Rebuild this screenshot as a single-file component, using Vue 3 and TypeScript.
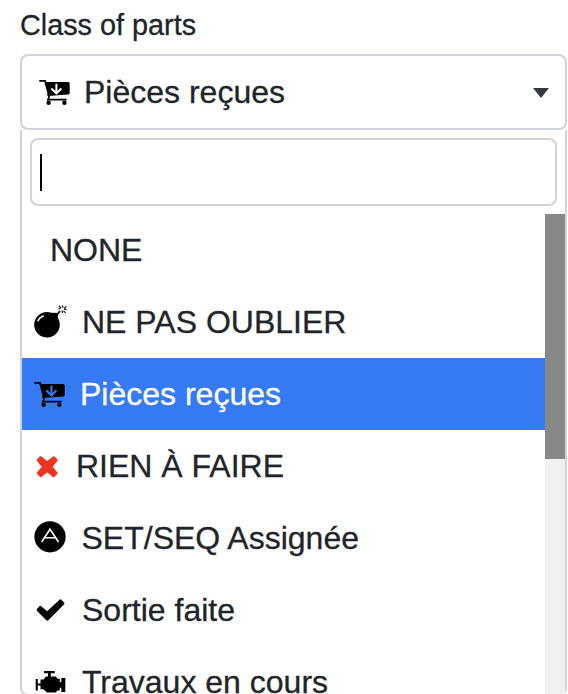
<script setup lang="ts">
import { defineComponent, h } from 'vue'

type IconName = 'bomb' | 'cart' | 'times' | 'letter' | 'check' | 'engine'

interface PartClass {
  id: string
  label: string
  icon?: IconName
}

const shapes: Record<IconName, [string, Record<string, string>][]> = {
  bomb: [
    ['circle', { cx: '15', cy: '20.7', r: '12.8' }],
    ['path', { d: 'M18.5 10.2l2.2-1.8 1.8.8 1.5-.8 2.4 2.6-.8 1.5.8 1.8-2.4 2.6z' }],
    ['path', { d: 'M25 10.5l3-3.6', class: 'thin' }],
    ['path', { d: 'M30.7 1.5v2.2M27 2l2.2 2M34.3 2.4l-2.2 1.8M32.2 5.4h2.3M31.5 6.8l2.2 2M30.2 6.6l.1 2.3M26.4 4.7h2', class: 'spark' }],
    ['path', { d: 'M5.8 17.2C6.8 14.7 9 12.7 11.8 12', class: 'shine' }],
  ],
  cart: [
    ['path', { d: 'M2.3 6h6.3l.8 2h21.8q1.5 0 1.5 1.5v9.6q0 1.3-1.4 1.5L11.2 22.1 7.3 7.7h-5z' }],
    ['path', { d: 'M10.6 20l1.6 3-1.4 2.6h18.8', class: 'rail' }],
    ['circle', { cx: '11.6', cy: '28.8', r: '2.2' }],
    ['circle', { cx: '27.4', cy: '28.8', r: '2.2' }],
    ['path', { d: 'M19.4 9.8v9.4M14.3 14.6l5.1 4.7 5-4.7', class: 'arrow' }],
  ],
  times: [
    ['path', { d: 'M8.7 9.5l6.5 5.2 6.5-5.2 2.7 2.7-5.3 6.5 5.3 6.5-2.7 2.7-6.5-5.2-6.5 5.2L6 25.2l5.3-6.5L6 12.2z', class: 'red' }],
  ],
  letter: [
    ['circle', { cx: '18', cy: '16.8', r: '15.6' }],
    ['path', { d: 'M9.7 22L18 9.2 26.5 22M12.9 17.7h10.3', class: 'stroke-light' }],
  ],
  check: [
    ['path', { d: 'M8.3 15.3l7 5.8L28.4 8.8l2.6 2.7-15.7 15.7-9.2-9.3z', class: 'rounded' }],
  ],
  engine: [
    ['path', { d: 'M12 7h10.8v2.3h-4v3.2h5l1.8 2.2h2.2v3.3h1.5v-4h4V28h-4v-4.2h-1.5v2.7h-2.3l-1.8 1.9H15l-3.6-3.2H8.5v-3.6H5.8v4.9H3.7V15h2.1v4.5h2.7v-4.1h3l2.4-2.9H16V9.3h-4z' }],
  ],
}

const PartIcon = defineComponent({
  props: { name: { type: String, required: true } },
  setup(props) {
    return () =>
      h(
        'svg',
        { viewBox: '0 0 36 36', width: 36, height: 36, 'aria-hidden': 'true' },
        shapes[props.name as IconName].map(([tag, attrs]) => h(tag, attrs)),
      )
  },
})

const selectedId = 'received'
const options: PartClass[] = [
  { id: 'none', label: 'NONE' },
  { id: 'remember', label: 'NE PAS OUBLIER', icon: 'bomb' },
  { id: 'received', label: 'Pièces reçues', icon: 'cart' },
  { id: 'nothing', label: 'RIEN À FAIRE', icon: 'times' },
  { id: 'assigned', label: 'SET/SEQ Assignée', icon: 'letter' },
  { id: 'done', label: 'Sortie faite', icon: 'check' },
  { id: 'progress', label: 'Travaux en cours', icon: 'engine' },
]
</script>

<template>
  <main class="field">
    <div class="label">Class of parts</div>
    <div class="selection">
      <PartIcon name="cart" class="icon" />
      <span class="value">Pièces reçues</span>
      <svg class="toggle" viewBox="0 0 16 10" width="16" height="10"><path d="M0 0h16L8 10z" /></svg>
    </div>
    <div class="dropdown">
      <div class="search"><span class="cursor"></span></div>
      <div class="results">
        <ul class="options">
          <li v-for="o in options" :key="o.id" :class="['option', o.id, { active: o.id === selectedId }]">
            <PartIcon v-if="o.icon" :name="o.icon" class="icon" />
            <span class="text">{{ o.label }}</span>
          </li>
        </ul>
        <div class="track"><div class="thumb"></div></div>
      </div>
    </div>
  </main>
</template>

<style>
body {
  background: #fff;
  overflow: hidden;
}
</style>

<style scoped>
.field {
  box-sizing: border-box;
  width: 568px;
  height: 694px;
  padding: 0 1px 0 20px;
  overflow: hidden;
  font-family: "Liberation Sans", Arial, sans-serif;
  font-size: 32px;
  color: #212529;
  white-space: nowrap;
  -webkit-text-stroke: 0.3px currentColor;
}
.label {
  height: 54px;
  line-height: 50px;
  font-size: 28.8px;
}
.selection {
  box-sizing: border-box;
  display: flex;
  align-items: center;
  height: 76px;
  padding: 0 16px 0 15px;
  border: 2px solid #ced4da;
  border-radius: 8px;
}
.value {
  flex: 1;
  margin-left: 11px;
}
.toggle {
  position: relative;
  top: 1px;
  fill: #343a40;
}
.dropdown {
  box-sizing: border-box;
  height: 566px;
  padding-top: 8px;
  border: 2px solid #ced4da;
  border-top: 0;
  border-radius: 0 0 8px 8px;
}
.search {
  box-sizing: border-box;
  height: 68px;
  margin: 0 8px 8px;
  padding: 14px 8px;
  border: 2px solid #ced4da;
  border-radius: 8px;
}
.cursor {
  display: block;
  width: 2px;
  height: 37px;
  background: #000;
}
.results {
  display: flex;
  height: 480px;
  overflow: hidden;
}
.options {
  flex: 1;
  margin: 0;
  padding: 0;
  list-style: none;
}
.option {
  box-sizing: border-box;
  display: flex;
  align-items: center;
  height: 72px;
  padding-left: 10px;
}
.active {
  background: #367af6;
  color: #fff;
}
.text {
  margin-left: 14px;
}
.none .text {
  margin-left: 18px;
}
.received .text {
  margin-left: 12px;
}
.nothing .text {
  margin-left: 8px;
}
.assigned .text {
  margin-left: 13.5px;
}
.track {
  width: 20px;
  background: #f0f0f0;
}
.thumb {
  height: 245px;
  background: #888;
}
.icon {
  flex: none;
  fill: #000;
}
.icon :deep(.thin),
.icon :deep(.spark),
.icon :deep(.rail) {
  fill: none;
  stroke: #000;
  stroke-width: 1.6;
}
.icon :deep(.spark) {
  stroke-width: 1.1;
}
.icon :deep(.shine),
.icon :deep(.arrow),
.icon :deep(.stroke-light) {
  fill: none;
  stroke: #fff;
  stroke-width: 1.6;
}
.icon :deep(.arrow) {
  stroke-width: 2;
}
.active .icon :deep(.arrow) {
  stroke: #367af6;
}
.icon :deep(.red) {
  fill: #ee3524;
  stroke: #ee3524;
  stroke-width: 2.6;
  stroke-linejoin: round;
}
.icon :deep(.rounded) {
  stroke: #000;
  stroke-width: 2.8;
  stroke-linejoin: round;
}
</style>
